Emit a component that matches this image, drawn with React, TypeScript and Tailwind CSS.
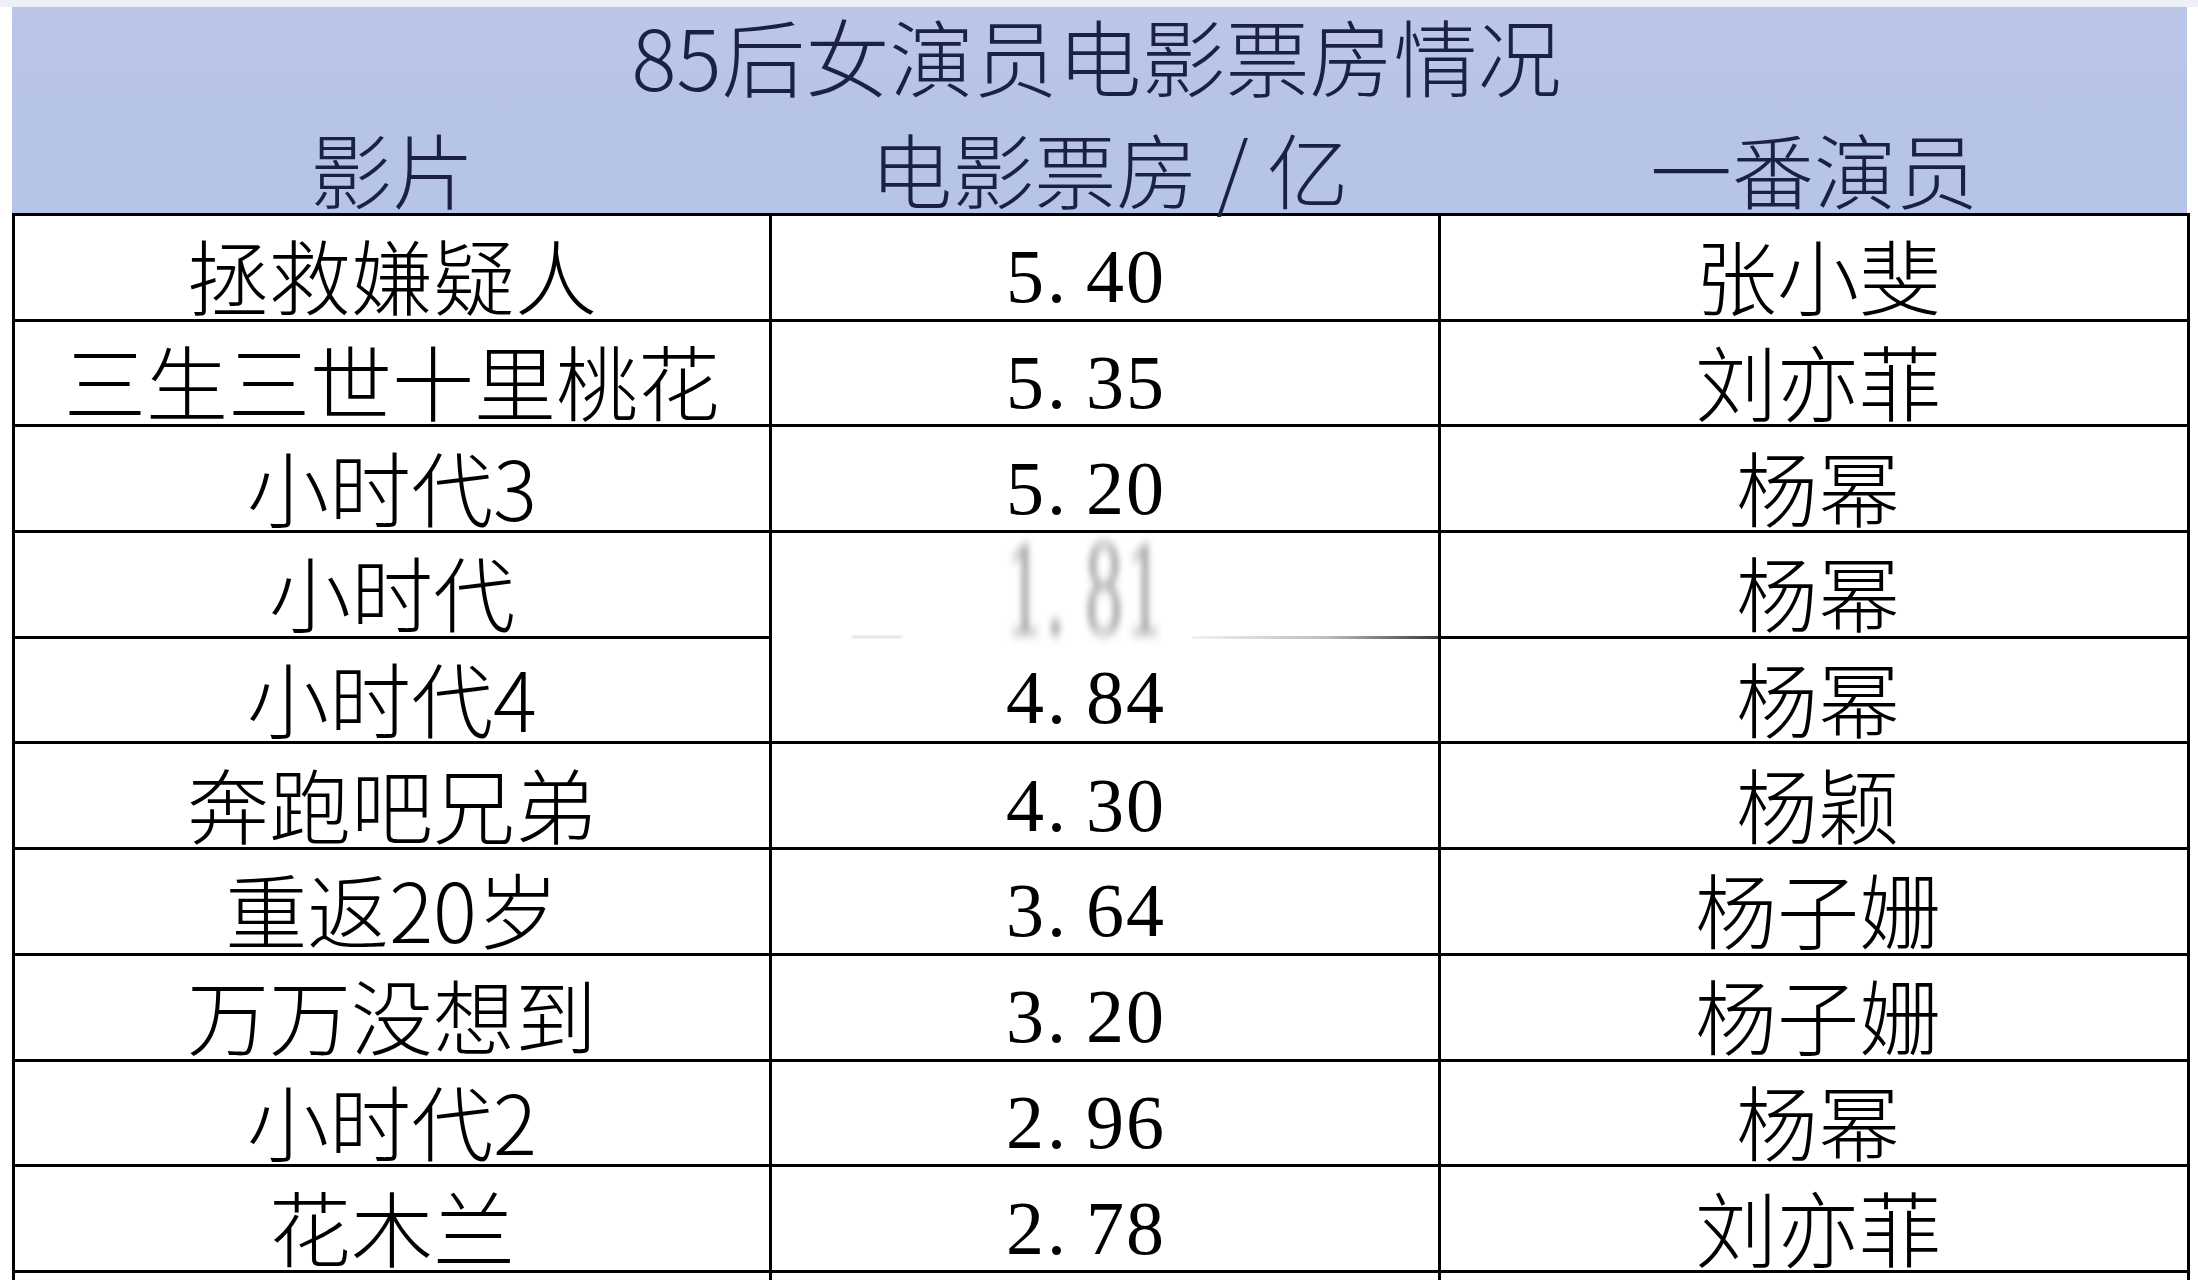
import React from "react";

const rows: { film: string; box: string; actor: string }[] = [
  { film: "拯救嫌疑人", box: "5.40", actor: "张小斐" },
  { film: "三生三世十里桃花", box: "5.35", actor: "刘亦菲" },
  { film: "小时代3", box: "5.20", actor: "杨幂" },
  { film: "小时代", box: "4.84", actor: "杨幂" },
  { film: "小时代4", box: "4.84", actor: "杨幂" },
  { film: "奔跑吧兄弟", box: "4.30", actor: "杨颖" },
  { film: "重返20岁", box: "3.64", actor: "杨子姗" },
  { film: "万万没想到", box: "3.20", actor: "杨子姗" },
  { film: "小时代2", box: "2.96", actor: "杨幂" },
  { film: "花木兰", box: "2.78", actor: "刘亦菲" },
];

function Num({ v, ghost = false }: { v: string; ghost?: boolean }) {
  return (
    <span
      className={
        "inline-flex font-['Liberation_Serif',serif] text-[76px] leading-none " +
        (ghost ? "text-[#7a7a7a]" : "text-black")
      }
    >
      {v.split("").map((c, i) =>
        c === "." ? (
          <span key={i} className="inline-block w-[40px] text-left pl-[2px]">
            .
          </span>
        ) : (
          <span key={i} className="inline-block w-[40px] text-center">
            {c}
          </span>
        )
      )}
      <span className="inline-block w-[40px]" />
    </span>
  );
}

const cjk = "font-['Noto_Sans_CJK_SC',sans-serif]";

export default function App() {
  return (
    <div className={`w-[2198px] h-[1280px] bg-white overflow-hidden ${cjk}`}>
      <div className="h-[7px] bg-[#eef0f6]" />
      <div className="ml-[12px] w-[2178px]">
        {/* Header */}
        <div className="h-[206px] w-[2175px] bg-[linear-gradient(180deg,#bcc6ea_0%,#b7c4e8_40%,#b6c4e7_100%)] flex flex-col text-[#1a2145] font-light">
          <div className="h-[116px] flex items-start justify-center text-[84px] leading-none pt-[6px] pr-[6px]">
            85后女演员电影票房情况
          </div>
          <div className="h-[90px] grid grid-cols-[760px_669px_746px] items-center text-[82px] leading-none">
            <div className="text-center">影片</div>
            <div className="text-center pl-[6px]">电影票房 / 亿</div>
            <div className="text-center">一番演员</div>
          </div>
        </div>
        {/* Body */}
        <div className="border-t-[3px] border-l-[3px] border-r-[3px] border-black grid grid-cols-[757px_669px_746px] grid-rows-[repeat(11,105.7px)] font-light text-black">
          {rows.map((r, i) => {
            const cells: React.ReactNode[] = [];
            cells.push(
              <div
                key={`f${i}`}
                className="border-b-[3px] border-r-[3px] border-black flex items-center justify-center text-[82px] leading-none pt-[14px]"
                style={{ gridRow: i + 1, gridColumn: 1 }}
              >
                {r.film}
              </div>
            );
            if (i === 3) {
              cells.push(
                <div
                  key={`b${i}`}
                  className="relative border-b-[3px] border-r-[3px] border-black flex items-end justify-center pb-[6px]"
                  style={{ gridRow: "4 / span 2", gridColumn: 2 }}
                >
                  <div className="absolute left-[80px] top-[103px] w-[50px] h-[2px] bg-[#d8d8d8] blur-[1px]" />
                  <div className="absolute left-[420px] top-[103px] w-[246px] h-[3px] bg-[linear-gradient(90deg,#f2f2f2,#bdbdbd_55%,#3a3a3a)] blur-[0.5px]" />
                  <div className="absolute left-[232px] top-[-14px] origin-top scale-y-[1.8] blur-[3px] opacity-70">
                    <Num v="1.81" ghost />
                  </div>
                  <Num v="4.84" />
                </div>
              );
            } else if (i !== 4) {
              cells.push(
                <div
                  key={`b${i}`}
                  className="border-b-[3px] border-r-[3px] border-black flex items-center justify-center pt-[18px]"
                  style={{ gridRow: i + 1, gridColumn: 2 }}
                >
                  <Num v={r.box} />
                </div>
              );
            }
            cells.push(
              <div
                key={`a${i}`}
                className="border-b-[3px] border-black flex items-center justify-center text-[82px] leading-none pt-[14px] pl-[8px]"
                style={{ gridRow: i + 1, gridColumn: 3 }}
              >
                {r.actor}
              </div>
            );
            return cells;
          })}
          <div className="border-r-[3px] border-black" style={{ gridRow: 11, gridColumn: 1 }} />
          <div className="border-r-[3px] border-black" style={{ gridRow: 11, gridColumn: 2 }} />
          <div style={{ gridRow: 11, gridColumn: 3 }} />
        </div>
      </div>
    </div>
  );
}
